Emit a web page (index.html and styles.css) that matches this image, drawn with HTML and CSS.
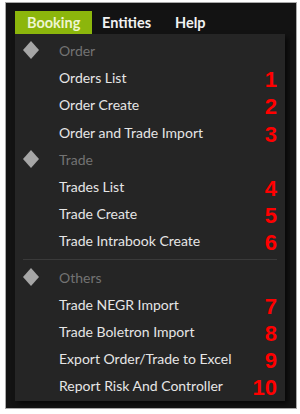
FILE: index.html
```html
<!DOCTYPE html>
<html lang="en">
<head>
  <meta charset="UTF-8">
  <title>Booking menu</title>
  <link rel="stylesheet" href="styles.css">
</head>
<body>
  <div class="window">
    <div class="menubar">
      <span class="top-item active">Booking</span>
      <span class="top-item">Entities</span>
      <span class="top-item">Help</span>
    </div>
    <div class="dropdown">
      <div class="row header">
        <svg class="diamond" viewBox="0 0 16 18"><polygon points="8,0 16,9 8,18 0,9"/></svg>
        <span class="label">Order</span>
      </div>
      <div class="row"><span class="label">Orders List</span><span class="num">1</span></div>
      <div class="row"><span class="label">Order Create</span><span class="num">2</span></div>
      <div class="row"><span class="label">Order and Trade Import</span><span class="num">3</span></div>
      <div class="row header">
        <svg class="diamond" viewBox="0 0 16 18"><polygon points="8,0 16,9 8,18 0,9"/></svg>
        <span class="label">Trade</span>
      </div>
      <div class="row"><span class="label">Trades List</span><span class="num">4</span></div>
      <div class="row"><span class="label">Trade Create</span><span class="num">5</span></div>
      <div class="row"><span class="label">Trade Intrabook Create</span><span class="num">6</span></div>
      <div class="separator"></div>
      <div class="row header">
        <svg class="diamond" viewBox="0 0 16 18"><polygon points="8,0 16,9 8,18 0,9"/></svg>
        <span class="label">Others</span>
      </div>
      <div class="row"><span class="label">Trade NEGR Import</span><span class="num">7</span></div>
      <div class="row"><span class="label">Trade Boletron Import</span><span class="num">8</span></div>
      <div class="row"><span class="label">Export Order/Trade to Excel</span><span class="num">9</span></div>
      <div class="row"><span class="label">Report Risk And Controller</span><span class="num">10</span></div>
    </div>
  </div>
</body>
</html>
```

FILE: styles.css
```css
* {
  margin: 0;
  padding: 0;
  box-sizing: border-box;
}

body {
  background: #fff;
  font-family: Lato, "Open Sans", sans-serif;
  padding: 2px 0 0 5px;
}

.window {
  width: 292px;
  height: 407px;
  background: #131313;
  border: 1px solid #a9a9a9;
}

/* barre de menu */
.menubar {
  display: flex;
  padding: 8px 0 0 9px;
  height: 31px;
}

.top-item {
  color: #f2f2f2;
  font-size: 14.5px;
  font-weight: 700;
  line-height: 23px;
  padding: 0 12px;
}

.top-item.active {
  background: #8cb60c;
  color: #eef5d0;
  width: 77px;
  margin-right: -2px;
}

/* liste deroulante */
.dropdown {
  margin-left: 9px;
  width: 270px;
  height: 367px;
  background: #252525;
  box-shadow: 3px 3px 5px rgba(0, 0, 0, 0.6);
  padding: 3px 8px 2px 0;
}

.row {
  display: flex;
  align-items: center;
  height: 27.2px;
  padding-left: 44px;
  position: relative;
}

.label {
  color: #e6e6e6;
  font-size: 14px;
}

.header .label {
  color: #737373;
}

.diamond {
  position: absolute;
  left: 8px;
  top: 4px;
  width: 16px;
  height: 18px;
  fill: #a6a6a6;
}

.num {
  margin-left: auto;
  color: #ff0000;
  font-family: "Liberation Sans", Arial, sans-serif;
  font-weight: bold;
  font-size: 22px;
  line-height: 1;
  padding-top: 5px;
}

.separator {
  height: 1px;
  background: #3a3a3a;
  margin: 4px 0 4px 8px;
}
```
